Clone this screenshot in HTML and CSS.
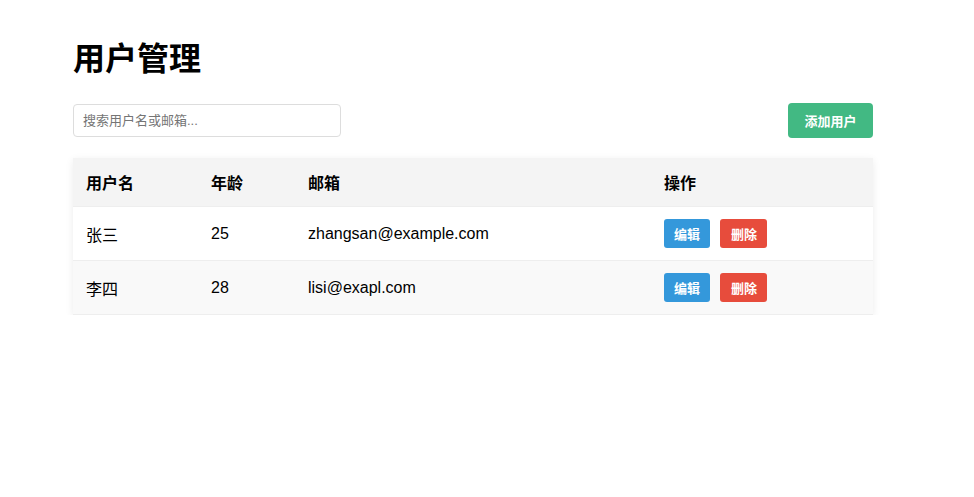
FILE: index.html
```html
<!DOCTYPE html>
<html lang="zh-CN">
<head>
  <meta charset="UTF-8" />
  <meta name="viewport" content="width=device-width, initial-scale=1.0"/>
  <title>用户管理</title>
  <link rel="stylesheet" href="styles.css">
</head>
<body>
  <div class="page">
    <h1 class="page-title">用户管理</h1>

    <div class="toolbar">
      <input type="text" class="search-input" placeholder="搜索用户名或邮箱..." />
      <button class="btn btn-add">添加用户</button>
    </div>

    <table class="user-table">
      <thead>
        <tr>
          <th class="col-name">用户名</th>
          <th class="col-age">年龄</th>
          <th class="col-email">邮箱</th>
          <th class="col-actions">操作</th>
        </tr>
      </thead>
      <tbody>
        <tr>
          <td>张三</td>
          <td>25</td>
          <td>zhangsan@example.com</td>
          <td>
            <button class="btn btn-small btn-edit">编辑</button>
            <button class="btn btn-small btn-delete">删除</button>
          </td>
        </tr>
        <tr>
          <td>李四</td>
          <td>28</td>
          <td>lisi@exapl.com</td>
          <td>
            <button class="btn btn-small btn-edit">编辑</button>
            <button class="btn btn-small btn-delete">删除</button>
          </td>
        </tr>
      </tbody>
    </table>
  </div>
</body>
</html>
```

FILE: styles.css
```css
body {
  margin: 0;
  font-family: "Liberation Sans", Arial, "Noto Sans CJK SC", sans-serif;
  color: #000;
  background: #fff;
}

.page {
  width: 800px;
  padding: 40px 0 0 73px;
}

.page-title {
  margin: 0 0 25px;
  font-size: 32px;
  line-height: 38px;
  font-weight: bold;
}

.toolbar {
  display: flex;
  justify-content: space-between;
  align-items: center;
  margin-bottom: 20px;
}

.search-input {
  width: 268px;
  height: 33px;
  box-sizing: border-box;
  padding: 0 9px;
  border: 1px solid #ddd;
  border-radius: 4px;
  font-family: inherit;
  font-size: 13px;
}

.search-input::placeholder {
  color: #757575;
}

.btn {
  border: none;
  border-radius: 4px;
  color: #fff;
  font-family: inherit;
  font-weight: bold;
  cursor: pointer;
}

.btn-add {
  width: 85px;
  height: 35px;
  padding: 0;
  font-size: 13px;
  background-color: #42b983;
}

.user-table {
  width: 800px;
  border-collapse: collapse;
  table-layout: fixed;
  box-shadow: 0 2px 8px rgba(0, 0, 0, 0.08);
}

.user-table th,
.user-table td {
  text-align: left;
  padding: 12px 13px;
  font-size: 16px;
  border-bottom: 1px solid #eee;
}

.user-table th {
  height: 24px;
  background-color: #f4f4f4;
  font-weight: bold;
}

.user-table td {
  height: 29px;
}

.user-table tbody tr:nth-child(even) {
  background-color: #f9f9f9;
}

.col-name { width: 99px; }
.col-age { width: 71px; }
.col-email { width: 330px; }
.col-actions { width: 196px; }

.btn-small {
  width: 46px;
  height: 29px;
  padding: 0;
  margin-right: 6px;
  font-size: 13px;
  border-radius: 3px;
}

.btn-delete {
  width: 47px;
  background-color: #e74c3c;
}

.btn-edit {
  background-color: #3498db;
}
```
